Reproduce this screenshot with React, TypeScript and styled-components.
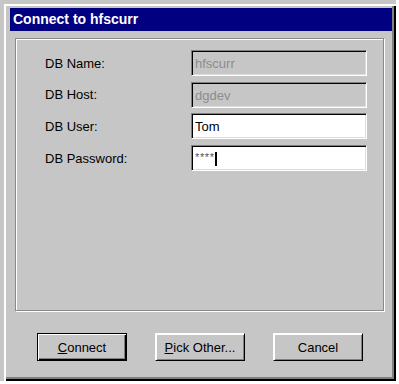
import React from "react"
import styled, { createGlobalStyle } from "styled-components"

const GlobalStyle = createGlobalStyle`
  html, body {
    margin: 0;
    padding: 0;
    background: #ffffff;
  }
  body {
    font-family: "Liberation Sans", Arial, sans-serif;
  }
`

const gray = "#c6c6c6"

const Window = styled.div`
  box-sizing: border-box;
  width: 396px;
  height: 381px;
  padding: 8px 4px 0 10px;
  background: ${gray};
  display: flex;
  flex-direction: column;
  box-shadow: inset 4px 4px 0 ${gray}, inset 6px 6px 0 #ffffff, inset -2px -2px 0 #000000,
    inset -4px -4px 0 #808080;
`

const TitleBar = styled.div`
  height: 23px;
  background: #000080;
  color: #ffffff;
  font-size: 14px;
  font-weight: bold;
  display: flex;
  align-items: center;
  padding-left: 3px;
  padding-bottom: 1px;
  box-sizing: border-box;
`

const GroupBox = styled.div`
  box-sizing: border-box;
  margin: 7px 0 0 5px;
  width: 369px;
  height: 273px;
  border: 1px solid #8a8a8a;
  box-shadow: 1px 1px 0 #ffffff, inset 1px 1px 0 #ffffff;
  padding: 11px 0 0 29px;
`

const FieldGrid = styled.div`
  display: grid;
  grid-template-columns: 146px 176px;
  grid-auto-rows: 26px;
  row-gap: 5.7px;
  align-items: center;
`

const Label = styled.div`
  font-size: 13px;
  color: #000000;
`

const Field = styled.div<{ $disabled?: boolean }>`
  box-sizing: border-box;
  height: 26px;
  background: ${({ $disabled }) => ($disabled ? gray : "#ffffff")};
  color: ${({ $disabled }) => ($disabled ? "#8c8c8c" : "#000000")};
  font-size: 13px;
  display: flex;
  align-items: center;
  padding: 1px 0 0 3px;
  border-top: 1px solid #808080;
  border-left: 1px solid #808080;
  border-right: 1px solid #ffffff;
  border-bottom: 1px solid #ffffff;
  box-shadow: inset 1px 1px 0 #000000, inset -1px -1px 0 #dcdcdc;
`

const Mask = styled.span`
  font-size: 11px;
  color: #555555;
  align-self: flex-start;
  margin-top: 4px;
  letter-spacing: 0.6px;
`

const Caret = styled.span`
  width: 2px;
  height: 14px;
  background: #000000;
`

const ButtonRow = styled.div`
  display: flex;
  gap: 28px;
  margin: 22px 0 0 27px;
`

const Button = styled.div<{ $default?: boolean }>`
  box-sizing: border-box;
  width: 90px;
  height: 28px;
  font-size: 13px;
  color: #000000;
  display: flex;
  align-items: center;
  justify-content: center;
  border: 1px solid ${({ $default }) => ($default ? "#000000" : "transparent")};
  border-right-color: #000000;
  border-bottom-color: #000000;
  box-shadow: ${({ $default }) =>
    $default
      ? "inset 1px 1px 0 #ffffff, inset -1px -1px 0 #000000, inset -2px -2px 0 #808080"
      : "inset 1px 1px 0 #ffffff, inset -1px -1px 0 #808080"};
  ${({ $default }) => (!$default ? "border-left-color: #ffffff; border-top-color: #ffffff;" : "")}
`

const fields = [
  { label: "DB Name:", value: "hfscurr", disabled: true },
  { label: "DB Host:", value: "dgdev", disabled: true },
  { label: "DB User:", value: "Tom", disabled: false },
]

export default function App() {
  return (
    <>
      <GlobalStyle />
      <Window>
        <TitleBar>Connect to hfscurr</TitleBar>
        <GroupBox>
          <FieldGrid>
            {fields.map((f) => (
              <React.Fragment key={f.label}>
                <Label>{f.label}</Label>
                <Field $disabled={f.disabled}>{f.value}</Field>
              </React.Fragment>
            ))}
            <Label>DB Password:</Label>
            <Field>
              <Mask>****</Mask>
              <Caret />
            </Field>
          </FieldGrid>
        </GroupBox>
        <ButtonRow>
          <Button $default>
            <span>
              <u>C</u>onnect
            </span>
          </Button>
          <Button>
            <span>
              <u>P</u>ick Other...
            </span>
          </Button>
          <Button>Cancel</Button>
        </ButtonRow>
      </Window>
    </>
  )
}
